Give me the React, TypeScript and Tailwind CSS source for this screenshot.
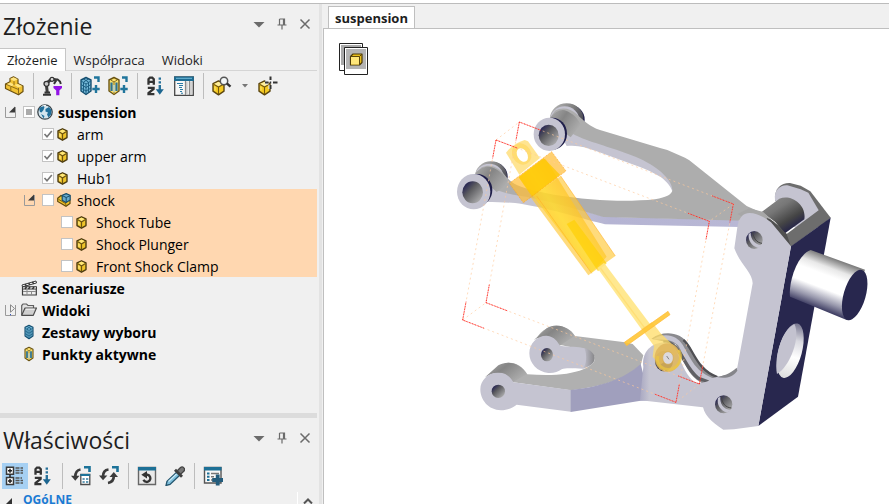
import React, { useState } from 'react'
import clsx from 'clsx'

type IconProps = { className?: string }

const Svg = ({ className = 'h-5 w-5', box = '0 0 20 20', children }: { className?: string, box?: string, children: React.ReactNode }) => (
  <svg className={clsx('block shrink-0', className)} viewBox={box} fill="none" aria-hidden="true">{children}</svg>
)

/* ---------- small icons ---------- */

const CubeIcon = ({ className = 'mr-1 h-[13px] w-[11px]' }: IconProps) => (
  <Svg className={className} box="0 0 11 13">
    <path d="M5.5 .8 10 2.9V9.6L5.5 12.2 1 9.6V2.9Z" fill="#eec42a" stroke="#4d3c10" strokeWidth="1.4" strokeLinejoin="round" />
    <path d="M5.5 1.6 8.8 3.3 5.5 5.4 2.2 3.3Z" fill="#ffe777" />
    <path d="M2 3.8 5.5 6.1 9 3.8M5.5 6.1V11" stroke="#6d5411" strokeWidth="1.2" />
    <path d="M3 5.6v3.2" stroke="#fff0a0" />
  </Svg>
)

const BlueCube = () => (
  <>
    <path d="M8 1.5 13 4V15L8 18.5 3 15V4Z" fill="#74b8d8" stroke="#164f70" strokeWidth="1.4" strokeLinejoin="round" />
    <path d="M3 5 8 8l5-3M8 8v10M3 8.5 8 11.5l5-3M3 12l5 3 5-3M5.5 3 10.5 6M10.5 3 5.5 6M5.5 6.5V16M10.5 6.5V16" stroke="#1d5f83" strokeWidth="1" />
  </>
)

const YellowPoint = () => (
  <>
    <path d="M8 1.5 13 4V15L8 18.5 3 15V4Z" fill="#ffe46d" stroke="#6b5514" strokeWidth="1.4" strokeLinejoin="round" />
    <path d="M5.5 6.5V15M10.5 6.5V15" stroke="#2a7196" strokeWidth="2.2" />
    <path d="M8 5v12M5 4.2 8 6l3-1.8" stroke="#8d762b" strokeWidth="1" />
    <path d="M8 9v7" stroke="#b9dff0" strokeWidth="1.4" />
  </>
)

const AddMark = () => (
  <path d="M14 1.5H18.5V6M16 9v8M12.3 13h7.4" stroke="#20759c" strokeWidth="2.4" />
)

const PartIcon = () => (
  <Svg>
    <path d="M1.5 8 6 5.8V2.5L9.5 .8 14 3.2V7.5L19 10V15.5L14.5 18.8 1.5 12.5Z" fill="#f1c233" stroke="#6b5010" strokeWidth="1.2" strokeLinejoin="round" />
    <path d="m6 3 4 2 3.8-1.8L9.6 1.3ZM2.5 8.2l4.4 2.2 3.4-1.6L6.2 6.6ZM10.3 8.8 14.4 11.5 18.2 10 14 8Z" fill="#ffe583" />
    <path d="M10 5.2V9M6.8 10.8v4M14.5 11.8v6M1.8 8.2 14.5 13.5" stroke="#8e6c15" />
  </Svg>
)

const RobotFilterIcon = () => (
  <Svg>
    <path d="M1 18.7H9M2.5 16.5H8" stroke="#333" strokeWidth="2" />
    <path d="M5.3 16.5 4.2 7.5 9.5 3.2 15 4" stroke="#3c3c3c" strokeWidth="3" />
    <circle cx="4.5" cy="7.8" r="2.5" fill="#c9c9c9" stroke="#333" strokeWidth="1.3" />
    <circle cx="10" cy="3.3" r="2" fill="#ddd" stroke="#333" strokeWidth="1.2" />
    <path d="M14 4.5 12 8M15 3l3 2.5 .8 2.5" stroke="#333" strokeWidth="2" />
    <path d="M11.5 10H20V12L17.4 14.5V19.3H14.2V14.5L11.5 12Z" fill="#9213e6" />
  </Svg>
)

const SelectionAddIcon = () => <Svg><g transform="translate(-2 0)"><BlueCube /></g><AddMark /></Svg>
const PointAddIcon = () => <Svg><g transform="translate(-2 0)"><YellowPoint /></g><AddMark /></Svg>

const SortIcon = () => (
  <Svg>
    <path d="M2.5 8.8V3.3L4 1.6H6.2L7.8 3.3V8.8M2.5 5.8H7.8M1.8 11.8H7.6V13L2.5 17V18.2H8.4" stroke="#333" strokeWidth="2.3" />
    <path d="M13.8 1.5v2.3M13.8 5.3v2.3M13.8 9v7" stroke="#27719a" strokeWidth="2.4" />
    <path d="M9.8 13.2H17.8L13.8 18.8Z" fill="#1d6690" />
  </Svg>
)

const ColumnsIcon = () => (
  <Svg>
    <path d="M.7 1H19.3V19.3H.7Z" fill="#f7f7f7" stroke="#484848" strokeWidth="1.3" />
    <path d="M.2.5H19.8V5H.2Z" fill="#1d6d94" />
    <path d="M2 2.3H18" stroke="#72b9d8" strokeWidth="1" />
    <path d="M11.5 5V19M15.5 5V19" stroke="#8b8b8b" strokeWidth="1.2" />
    <path d="M12.8 5.5V19M17 5.5V19" stroke="#c9c9c9" strokeWidth="1.6" />
    <path d="M3 7.5H9M5 9.5H9M5 11.5H8M6 13.5H9M6 15.5H8M7 17.3H9" stroke="#2a7ba5" strokeWidth="1.1" />
  </Svg>
)

const ToolCube = () => (
  <>
    <path d="M6.5 5 12 7.7V15.2L6.5 18.8 1 15.2V7.7Z" fill="#f5ca22" stroke="#5c460f" strokeWidth="1.4" strokeLinejoin="round" />
    <path d="M6.5 5.8 11 8 6.5 10.7 2 8Z" fill="#ffef9b" />
    <path d="M2 8.4 6.5 11 11 8.4M6.5 11v7" stroke="#76590c" strokeWidth="1.1" />
    <path d="M3 10.5v4" stroke="#ffe876" />
  </>
)

const FindPartIcon = () => (
  <Svg>
    <ToolCube />
    <circle cx="12" cy="5" r="3.7" fill="#f3f7f8" stroke="#555" strokeWidth="1.5" />
    <path d="m14.8 7.4 3.7 3.2" stroke="#333" strokeWidth="2.5" />
  </Svg>
)

const LocatePartIcon = () => (
  <Svg>
    <ToolCube />
    <path d="M12.5.5V4M12.5 9v4M7 6.5h3.5M15 6.5h4.5" stroke="#f0f0f0" strokeWidth="4" />
    <path d="M12.5.5V4M12.5 9v4M7 6.5h3.5M15 6.5h4.5M11.8 6.5h1.4" stroke="#333" strokeWidth="2" />
  </Svg>
)

const CategoryIcon = () => (
  <Svg>
    <path d="M1.5 1.2H8.5V8.2H1.5ZM1.5 11.5H8.5V18.5H1.5Z" fill="#fff" stroke="#3a3a3a" strokeWidth="1.5" />
    <path d="M5 2.8V6.8M3 4.8H7M5 13V17M3 15H7M5 8.5v3" stroke="#222" strokeWidth="1.5" />
    <path d="M10.5 2H18M10.5 4.5H18M10.5 7H18M10.5 12H17M10.5 14.5H18M10.5 17H18" stroke="#555" strokeWidth="1.4" strokeDasharray="4 1" />
  </Svg>
)

const CopyStateIcon = () => (
  <Svg>
    <path d="M9.5 3.5C6 4 4.3 6.8 4.3 11" stroke="#3b3b3b" strokeWidth="2.7" />
    <path d="M0 9.8H8.5L4.3 14.8Z" fill="#3b3b3b" />
    <path d="M13 1.3h5.5V6" stroke="#1d7399" strokeWidth="2.6" />
    <path d="M9.8 8.5h9v10h-9z" fill="#fff" stroke="#4b4b4b" strokeWidth="1.3" />
    <path d="M9.5 9h9.6" stroke="#1d7399" strokeWidth="2" />
    <path d="M11.5 13h2.2M15 13h2.3M11.5 16h2.2M15 16h2.3" stroke="#337ca0" strokeWidth="1.6" />
  </Svg>
)

const SyncIcon = () => (
  <Svg>
    <path d="M9.5 3.5C5.5 4 4 6.5 4 10.5" stroke="#3b3b3b" strokeWidth="2.7" />
    <path d="M0 9.5H8.3L4 14.3Z" fill="#3b3b3b" />
    <path d="M9 17c4-.7 5.8-3.5 5.8-7" stroke="#3b3b3b" strokeWidth="2.7" />
    <path d="M10.5 11H19L14.8 6Z" fill="#3b3b3b" />
    <path d="M13 1.3h5.5V6" stroke="#1d7399" strokeWidth="2.6" />
  </Svg>
)

const ResetIcon = () => (
  <Svg>
    <path d="M1.5 1.5h17v17h-17z" fill="#e9e9e9" stroke="#666" strokeWidth="1.4" />
    <path d="M1 1h18v3.5H1z" fill="#1d7096" />
    <path d="M7.5 8.8h3a3.6 3.6 0 1 1-4 5" stroke="#333" strokeWidth="2.4" />
    <path d="M4.3 8.8 10 5V12.4Z" fill="#333" />
  </Svg>
)

const PipetteIcon = () => (
  <Svg>
    <path d="m12 6 3 3L5 18.5l-4 1 1-4.2Z" fill="#7dbedb" stroke="#24566f" strokeWidth="1.3" />
    <path d="M3.5 15.5 11.5 8" stroke="#c9eaf6" strokeWidth="1.3" />
    <path d="M12.3 4.7 15.5 1.5C17.8-.3 21 3 18.8 5.2l-3.3 3.2" fill="#777" stroke="#444" strokeWidth="1.3" />
    <path d="m10 3.8 7 7" stroke="#3e3e3e" strokeWidth="2.8" />
  </Svg>
)

const AddPropertyIcon = () => (
  <Svg>
    <path d="M1.5 1.5h16.5v15.5H1.5z" fill="#f8f8f8" stroke="#555" strokeWidth="1.4" />
    <path d="M1 1h17.5v3.5H1z" fill="#1d7096" />
    <path d="M4 7.5h2.5M4 10.8h2.5M4 14h2.5" stroke="#1d7096" strokeWidth="2" />
    <path d="M8 7.5h8M8 10.8h3M8 14h2" stroke="#777" strokeWidth="1.5" />
    <path d="M14.7 8.5v11M9.2 14h11" stroke="#235c7c" strokeWidth="3.8" />
  </Svg>
)

const GlobeIcon = () => (
  <Svg className="h-4 w-4" box="0 0 16 16">
    <circle cx="8" cy="8" r="7.2" fill="#d3e5ee" stroke="#3c464c" strokeWidth="1.3" />
    <path d="M2 4.5 5.5 1.5 7.5 3 6.5 6 4.5 8.5 3 8ZM8.5 5 12 3 14.5 6 14 10.5 11.5 13.5 10 10.5 11 8.5 8.5 7.5ZM4 10l3.5 2-1 2.5Z" fill="#216f9a" />
    <path d="M4.5 2.5 6.5 1.5 9 1.4" stroke="#fff" />
  </Svg>
)

const AssemblyIcon = () => (
  <Svg className="h-3.5 w-3.5" box="0 0 14 14">
    <path d="M.7 5.3 4 2.5 13 7v3.5L9 13.3.7 8.5Z" fill="#f1c52c" stroke="#5f490d" strokeWidth="1.2" />
    <path d="M5.2 2.3 9.2.6 13.2 2.3V7L9 9.5 5.2 7.3Z" fill="#68aacb" stroke="#184d6b" strokeWidth="1.2" />
    <path d="M5.5 2.7 9.2 4.5l3.8-1.8M9.2 4.5V9" stroke="#184d6b" />
    <path d="M1.5 6.3 8.8 10.7V13" stroke="#806010" />
  </Svg>
)

const ClapperIcon = () => (
  <Svg className="h-4 w-4" box="0 0 16 16">
    <path d="M1.5 7h13.8v8H1.5z" fill="#eee" stroke="#3c3c3c" strokeWidth="1.2" />
    <path d="M1 5 15 1l.5 2L1.5 6.8ZM1.5 6.8h14V9h-14z" fill="#fff" stroke="#3c3c3c" strokeWidth="1" />
    <path d="m4 4.2 1.5 1.5m2-2.5L9 4.7m2.3-2.6 1.5 1.6M4 9l1.5-2M7.5 9 9 7m2.5 2L13 7" stroke="#333" strokeWidth="1.5" />
    <path d="M2 11.5h13M6 9.5v5M10.5 12v3" stroke="#8a8a8a" />
  </Svg>
)

const FolderIcon = () => (
  <Svg className="h-4 w-4" box="0 0 16 16">
    <path d="M.7 13V3.5L2 2H5.5L7 3.5H12.5V6" fill="#e1e1e1" stroke="#606060" strokeWidth="1.2" />
    <path d="M.7 13.3 4 6H15.5L12.3 13.3Z" fill="#cfcfcf" stroke="#4d4d4d" strokeWidth="1.2" strokeLinejoin="round" />
    <path d="M4.8 7.2h8.8" stroke="#f6f6f6" />
  </Svg>
)

const SelectionSetIcon = () => <Svg className="h-4 w-3.5" box="1 0 14 20"><BlueCube /></Svg>
const ActivePointIcon = () => <Svg className="h-4 w-3.5" box="1 0 14 20"><YellowPoint /></Svg>

const Expander = ({ open }: { open: boolean }) => (
  <Svg className="h-3 w-3" box="0 0 12 12">
    <path d="M.5 1V11.5H10.5V1" stroke="#9a9a9a" />
    {open ? <path d="M10 .5V6.5H4Z" fill="#3a3a3a" /> : <path d="M5.5.8 9.5 4.5 5.5 8.2Z" fill="#f4f4f4" stroke="#888" />}
    {!open && <path d="M5.5 10v1.2" stroke="#3a57c0" />}
  </Svg>
)

/* ---------- panel pieces ---------- */

const PanelHeader = ({ title }: { title: string }) => (
  <header className="flex h-11 shrink-0 items-center pl-[3px] pr-[6px]">
    <h2 className="flex-1 text-[23px] leading-8 text-[#1e1e1e]">{title}</h2>
    <div className="flex gap-[11px] pb-1">
      <button type="button" aria-label="Menu">
        <Svg className="h-3 w-3" box="0 0 12 12"><path d="M.5 4H11.5L6 9.5Z" fill="#6b6b6b" /></Svg>
      </button>
      <button type="button" aria-label="Przypnij">
        <Svg className="h-3 w-3" box="0 0 12 12"><path d="M3.5 1H8.5V6.5M3.5 1V6.5M7.5 1V6.5M1.5 7H10.5M6 7V11.5" stroke="#6b6b6b" strokeWidth="1.2" /></Svg>
      </button>
      <button type="button" aria-label="Zamknij">
        <Svg className="h-3 w-3" box="0 0 12 12"><path d="M1.5 1.5 10.5 10.5M10.5 1.5 1.5 10.5" stroke="#6b6b6b" strokeWidth="1.5" /></Svg>
      </button>
    </div>
  </header>
)

const Separator = () => <span className="ml-px h-[26px] w-px bg-[#bdbdbd]" />

const Tool = ({ label, active, children }: { label: string, active?: boolean, children: React.ReactNode }) => (
  <button type="button" aria-label={label} className={clsx(active && '-m-[3px] bg-[#a6d0f3] p-[3px]')}>{children}</button>
)

type Item = {
  name: string
  level: number
  icon: React.ReactNode
  check?: 'on' | 'off' | 'mixed'
  open?: boolean
  bold?: boolean
  marked?: boolean
}

const items: Item[] = [
  { name: 'suspension', level: 0, icon: <GlobeIcon />, check: 'mixed', open: true, bold: true },
  { name: 'arm', level: 1, icon: <CubeIcon />, check: 'on' },
  { name: 'upper arm', level: 1, icon: <CubeIcon />, check: 'on' },
  { name: 'Hub1', level: 1, icon: <CubeIcon />, check: 'on' },
  { name: 'shock', level: 1, icon: <AssemblyIcon />, check: 'off', open: true, marked: true },
  { name: 'Shock Tube', level: 2, icon: <CubeIcon />, check: 'off', marked: true },
  { name: 'Shock Plunger', level: 2, icon: <CubeIcon />, check: 'off', marked: true },
  { name: 'Front Shock Clamp', level: 2, icon: <CubeIcon />, check: 'off', marked: true },
  { name: 'Scenariusze', level: 0, icon: <ClapperIcon />, bold: true },
  { name: 'Widoki', level: 0, icon: <FolderIcon />, open: false, bold: true },
  { name: 'Zestawy wyboru', level: 0, icon: <SelectionSetIcon />, bold: true },
  { name: 'Punkty aktywne', level: 0, icon: <ActivePointIcon />, bold: true },
]

const indent = ['pl-[5px]', 'pl-[24px]', 'pl-[43px]']

const TreeRow = ({ item }: { item: Item }) => {
  const [checked, setChecked] = useState(item.check === 'on')

  return (
    <li className={clsx('flex h-[22px] items-center', indent[item.level], item.marked && 'bg-[#ffd7b0]')}>
      <span className="w-3 shrink-0">
        {item.open !== undefined && <button type="button" aria-label={item.name} className="block"><Expander open={item.open} /></button>}
      </span>
      <label className={clsx('flex items-center', item.check ? 'ml-[6px]' : 'ml-1')}>
        {item.check && (
          <span className="mr-0.5 grid h-3 w-3 place-items-center">
            <input
              type="checkbox"
              checked={checked}
              ref={(el) => { if (el) el.indeterminate = item.check === 'mixed' }}
              onChange={(e) => setChecked(e.target.checked)}
              className="col-start-1 row-start-1 h-3 w-3 appearance-none border border-[#c3c3c3] bg-white"
            />
            {item.check === 'mixed' && <span className="pointer-events-none col-start-1 row-start-1 h-1.5 w-1.5 bg-[#ababab]" />}
            {checked && (
              <Svg className="pointer-events-none col-start-1 row-start-1 h-3 w-3" box="0 0 12 12">
                <path d="m2.5 6 2.5 2.8L9.8 3" stroke="#777" strokeWidth="1.6" />
              </Svg>
            )}
          </span>
        )}
        <span className="mr-[5px] flex w-4 justify-center">{item.icon}</span>
        <span className={clsx('whitespace-nowrap pt-0.5 text-sm leading-5 text-black', item.bold && 'font-bold')}>{item.name}</span>
      </label>
    </li>
  )
}

/* ---------- 3D view ---------- */

type P = [number, number]

// corners of the selection box: four on the upper side, four under them
const top: P[] = [[168, 150], [238, 96], [880, 342], [808, 394]]
const bottom: P[] = [[68, 690], [138, 638], [778, 882], [708, 937]]

const towards = (a: P, b: P, len: number): P => {
  const d = Math.hypot(b[0] - a[0], b[1] - a[1])
  return [a[0] + (b[0] - a[0]) * len / d, a[1] + (b[1] - a[1]) * len / d]
}

const SelectionBox = () => {
  const edges: [P, P][] = []
  const ticks: [P, P][] = []
  for (let i = 0; i < 4; i++) {
    edges.push([top[i], top[(i + 1) % 4]], [bottom[i], bottom[(i + 1) % 4]], [top[i], bottom[i]])
    const along = 3 - i
    ticks.push([top[i], towards(top[i], bottom[i], 56)], [bottom[i], towards(bottom[i], top[i], 56)])
    ticks.push([top[i], towards(top[i], top[along], 68)], [bottom[i], towards(bottom[i], bottom[along], 68)])
  }
  return (
    <>
      {edges.map(([a, b], i) => <path key={i} d={`M${a}L${b}`} stroke="#ffc999" strokeWidth="3" strokeDasharray="6 9" opacity=".65" />)}
      {ticks.map(([a, b], i) => <path key={i} d={`M${a}L${b}`} stroke="#f22" strokeWidth="3" strokeDasharray="3 2" />)}
    </>
  )
}

const UpperArm = () => (
  <>
    <ellipse cx="387" cy="89" rx="47" ry="45" fill="#1f1e4a" />
    <ellipse cx="380" cy="86" rx="50" ry="46" fill="url(#rim)" />
    <ellipse cx="374" cy="92" rx="44" ry="43" fill="#c5c4d1" />
    <ellipse cx="158" cy="260" rx="45" ry="43" fill="#1f1e4a" />
    <ellipse cx="153" cy="258" rx="48" ry="44" fill="url(#rim)" />
    <ellipse cx="148" cy="263" rx="43" ry="42" fill="#c5c4d1" />

    <path d="M340 90C375 130 405 130 470 150L600 200C650 220 702 262 702 290L697 304C692 290 682 276 662 261C640 248 620 238 600 231L470 184C440 172 410 164 380 168Z" fill="#c5c4d1" />
    <path d="M118 270C190 320 330 322 430 362L495 380 896 390 900 411 495 403C440 390 330 356 250 343C205 335 180 338 140 336Z" fill="url(#armWall)" />
    <path d="M332 82 345 62C368 50 392 56 410 72C430 92 450 110 480 120L660 174 682 180 735 203 748 211 920 348 955 364 910 392 490 381C400 356 330 332 230 316C190 308 150 300 125 268L110 248 125 232C150 220 175 232 190 250C205 270 222 284 246 291C290 306 380 324 480 330C530 334 600 333 645 328C680 322 697 312 697 300C697 272 660 234 600 206C540 180 460 160 420 142C385 126 375 115 345 95Z" fill="#adadad" />
    <path d="M330 84C345 64 365 56 378 62C398 70 414 84 422 104L392 142 350 110Z" fill="url(#boss)" />
    <path d="M106 250C118 234 140 226 155 232C180 240 200 262 206 282L170 306Z" fill="url(#boss)" />

    <ellipse cx="337" cy="131" rx="44" ry="48" fill="#1f1e4a" />
    <ellipse cx="328" cy="133" rx="47" ry="50" fill="#c5c4d1" />
    <ellipse cx="326" cy="136" rx="30" ry="32" fill="url(#bore)" />
    <ellipse cx="112" cy="300" rx="45" ry="48" fill="#1f1e4a" />
    <ellipse cx="101" cy="305" rx="50" ry="53" fill="#c5c4d1" />
    <ellipse cx="98" cy="307" rx="31" ry="33" fill="url(#bore)" />
  </>
)

const LowerArm = () => (
  <g transform="translate(30 600)">
    <path d="M262 142C285 100 350 94 375 138L525 157 548 162 580 196 572 226C520 268 470 288 362 301L190 277 140 240C165 205 210 215 232 253C300 258 360 255 400 238C430 225 438 212 434 200C428 184 380 175 330 165Z" fill="#b0b0b0" />
    <path d="M252 150 290 115C318 96 358 110 374 138L328 168C315 140 282 132 252 150Z" fill="url(#boss)" />
    <path d="M105 262 145 226C175 208 215 222 230 253L188 277C172 246 138 240 105 262Z" fill="url(#boss)" />
    <path d="M400 174C424 178 437 196 434 208C432 222 415 232 398 237Z" fill="url(#slotEnd)" />
    <path d="M290 137C315 140 322 155 330 167C360 172 385 168 403 175C412 195 410 225 398 236C370 236 350 232 335 238C325 246 310 250 295 249C262 246 238 220 238 190C238 160 262 136 290 137Z" fill="#c5c4d1" />
    <ellipse cx="291" cy="194" rx="18" ry="20" fill="url(#bore)" />
    <path d="M145 248C170 248 182 262 190 277L363 300V365L200 344C185 355 170 361 153 361C115 360 91 330 91 298C91 270 115 247 145 248Z" fill="#c5c4d1" />
    <ellipse cx="145" cy="304" rx="20" ry="20" fill="url(#bore)" />
    <path d="M362 300C455 290 520 268 572 222L600 331 572 332 362 366Z" fill="#a09fbd" />

    <path d="M604 146C640 120 692 126 713 160C737 196 748 244 806 260L850 250 860 240V262L775 288C700 260 706 200 676 162Z" fill="#8a8a8e" />
    <path d="M700 150C728 170 738 240 802 261" stroke="#505054" strokeWidth="7" />
    <path d="M606 149C645 124 680 136 698 164C722 205 738 250 796 266L772 280C712 258 706 200 684 166C665 148 640 148 606 149Z" fill="#c5c4d1" />
    <path d="M640 156C692 154 698 228 744 264L776 276" stroke="#606064" strokeWidth="10" />
    <path d="M580 230C574 180 612 153 652 158C690 168 688 240 734 276C756 288 790 262 850 258V354L758 352 585 332 570 331Z" fill="url(#bracket)" />
    <ellipse cx="642" cy="213" rx="27" ry="31" fill="#3a3840" />
  </g>
)

const Shock = () => (
  <>
    <path d="M198 188Q220 160 254 150L264 154 300 204 238 254Z" fill="#ffd966" fillOpacity=".72" />
    <ellipse cx="245" cy="192" rx="28" ry="33" fill="#ffd34f" fillOpacity=".5" transform="rotate(-30 245 192)" />
    <ellipse cx="247" cy="195" rx="15" ry="22" fill="#fff" transform="rotate(-30 247 195)" />
    <path d="M208 280 335 185 378 243 250 338Z" fill="#ffbe3a" fillOpacity=".72" />
    <path d="M272 322 362 258 526 498 445 556Z" fill="#ffc838" fillOpacity=".66" />
    <path d="M236 262 315 204 500 500 455 548Z" fill="url(#shock)" fillOpacity=".68" />
    <path d="M236 262 311 204 360 254 276 320Z" fill="#ffc800" fillOpacity=".75" />
    <path d="M380 402 403 389 500 520 474 544Z" fill="#ffcf00" fillOpacity=".65" />
    <path d="M208 280 335 185 378 243 250 338Z" stroke="#ff9d16" strokeDasharray="3 3" strokeWidth="2" />
    <path d="M290 318 455 550M362 258 526 498" stroke="#ffad24" strokeWidth="3" opacity=".55" />
    <path d="M472 534 492 518 630 702 606 720Z" fill="#ffe684" fillOpacity=".9" />
    <path d="M482 535 615 715" stroke="#ffd65c" strokeWidth="4" opacity=".5" />
    <path d="M604 716 636 696 662 730 720 785 660 824 638 800 642 768Z" fill="#ffdc66" fillOpacity=".75" />
    <path d="M553 757 684 664 690 674 560 767Z" fill="#ffc735" fillOpacity=".9" stroke="#ffb93a" strokeWidth="2" />
    <ellipse cx="683" cy="803" rx="39" ry="43" fill="#e0b65c" fillOpacity=".86" />
    <path d="M654 798C645 825 672 846 700 835C720 825 728 802 716 780" stroke="#edc740" strokeWidth="9" opacity=".7" />
    <ellipse cx="684" cy="804" rx="16" ry="19" fill="#dcd9dd" stroke="#d4a84c" strokeWidth="2" />
    <path d="m680 798 7 10" stroke="#555" strokeWidth="2" />
  </>
)

const Hub = () => (
  <g transform="translate(480 180)">
    <path d="M525 150C523 112 545 98 570 99L602 107 631 124 692 203 660 230 580 230Z" fill="#6d6d6d" />
    <path d="M525 150C520 120 542 104 562 106L602 118 625 128 657 182 590 240Z" fill="#c5c4d1" />
    <path d="M510 215 573 290 692 203 657 180 560 252 535 225Z" fill="#6d6d6d" />
    <path d="M485 186 538 146C575 132 620 165 613 208L555 250 525 215Z" fill="url(#pin)" />
    <path d="M412 192 448 175 490 186 530 225 500 240Z" fill="#a7a7a7" />
    <path d="M500 204C518 209 522 216 560 252L573 290 505 218Z" fill="#505050" />
    <path d="M573 289 692 203 594 740 475 828Z" fill="#28274e" />
    <path d="M448 189C470 189 495 202 513 217L573 289 475 828 402 838 370 839C332 812 305 792 308 752C304 718 318 686 350 681C372 678 402 682 412 652L458 400C458 368 420 342 403 295L413 225C419 199 432 189 448 189Z" fill="#c5c4d1" />
    <path d="M350 681C370 678 388 672 410 653L412 662C398 684 372 686 350 681Z" fill="#85858a" />

    <path d="M570 440C565 400 590 315 632 300L795 359 742 511Z" fill="url(#axle)" />
    <ellipse cx="764" cy="435" rx="33" ry="78" fill="#28274e" transform="rotate(16 764 435)" />

    <ellipse cx="571" cy="602" rx="35" ry="84" fill="url(#opening)" transform="rotate(15 571 602)" />
    <path d="M583 522C603 560 570 650 531 672C522 632 540 545 583 522Z" fill="#c3c2cf" />

    <ellipse cx="463" cy="270" rx="25" ry="27" fill="url(#bore)" />
    <path d="M452 248C452 268 465 284 485 286L475 294C455 288 444 272 446 252Z" fill="#c5c4d1" />
    <path d="M458 246C461 266 470 278 486 280" stroke="#444" strokeWidth="3" />
    <ellipse cx="371" cy="763" rx="26" ry="27" fill="url(#bore)" />
    <path d="M361 740C359 760 370 778 392 780L382 788C360 782 350 763 354 744Z" fill="#c5c4d1" />
    <path d="M364 739C366 760 376 772 394 774" stroke="#444" strokeWidth="3" />
  </g>
)

const Model = () => (
  <svg className="block h-full w-full" viewBox="-348 -183 1695 1425" preserveAspectRatio="xMinYMin meet" fill="none" role="img" aria-label="suspension">
    <defs>
      <linearGradient id="bore" x1="0" y1="0" x2="1" y2="1">
        <stop offset=".1" stopColor="#1e1c50" /><stop offset=".4" stopColor="#5b5b5f" /><stop offset="1" stopColor="#c2c2c2" />
      </linearGradient>
      <linearGradient id="boss" x1="0" y1="0" x2="1" y2=".6">
        <stop offset="0" stopColor="#acacac" /><stop offset=".45" stopColor="#858585" /><stop offset="1" stopColor="#aeaeae" />
      </linearGradient>
      <linearGradient id="rim" x1="0" y1="0" x2="1" y2=".5">
        <stop offset=".1" stopColor="#b4b4b4" /><stop offset=".6" stopColor="#808080" /><stop offset="1" stopColor="#4c4c55" />
      </linearGradient>
      <linearGradient id="slotEnd" x1="0" x2="1">
        <stop offset="0" stopColor="#c5c4d1" /><stop offset="1" stopColor="#858587" />
      </linearGradient>
      <linearGradient id="armWall" x1="0" x2="1">
        <stop offset=".3" stopColor="#c5c4d1" /><stop offset=".5" stopColor="#b5b4d3" /><stop offset="1" stopColor="#b9b8d5" />
      </linearGradient>
      <linearGradient id="bracket" x1="0" x2="1">
        <stop offset="0" stopColor="#a9a8c2" /><stop offset=".1" stopColor="#c5c4d1" />
      </linearGradient>
      <linearGradient id="pin" x1=".2" y1="0" x2=".8" y2=".8">
        <stop offset="0" stopColor="#8a8a8a" /><stop offset=".35" stopColor="#777" /><stop offset=".75" stopColor="#454545" /><stop offset="1" stopColor="#262548" />
      </linearGradient>
      <linearGradient id="axle" gradientUnits="userSpaceOnUse" x1="712" y1="328" x2="655" y2="478">
        <stop offset="0" stopColor="#777" /><stop offset=".2" stopColor="#e8e8e8" /><stop offset=".35" stopColor="#fff" /><stop offset=".6" stopColor="#fff" /><stop offset=".82" stopColor="#9999ad" /><stop offset="1" stopColor="#36355c" />
      </linearGradient>
      <linearGradient id="opening" x1="0" y1="0" x2="0" y2="1">
        <stop offset="0" stopColor="#77768f" /><stop offset=".3" stopColor="#d9d9e0" /><stop offset=".6" stopColor="#fff" /><stop offset="1" stopColor="#ddd" />
      </linearGradient>
      <linearGradient id="shock" gradientUnits="userSpaceOnUse" x1="330" y1="420" x2="430" y2="355">
        <stop offset="0" stopColor="#ffc928" /><stop offset=".4" stopColor="#ffde2b" /><stop offset="1" stopColor="#ffbd22" />
      </linearGradient>
    </defs>
    <UpperArm />
    <LowerArm />
    <Hub />
    <Shock />
    <SelectionBox />
  </svg>
)

const ViewThumbnail = () => (
  <Svg className="h-8 w-[29px]" box="0 0 29 32">
    <path d="M.5.5h23v27H.5z" fill="#fff" stroke="#222" />
    <path d="M2 2h20v20H2z" fill="#a9a9a9" />
    <path d="M5.5 4.5h23v27h-23z" fill="#fff" stroke="#222" />
    <path d="M7 6h20v20H7z" fill="#b4b4b4" />
    <path d="M11.5 13.5 14 11h9v8.5L20.5 22h-9z" fill="#e8bd19" stroke="#4d3a06" strokeWidth="1.2" strokeLinejoin="round" />
    <path d="M12 13.5h8.5V21.5H12z" fill="#ffe77a" />
    <path d="M11.5 13.5h9V22M20.5 13.5 23 11" stroke="#5b460a" />
  </Svg>
)

/* ---------- page ---------- */

const tabs = ['Złożenie', 'Współpraca', 'Widoki']

const App = () => {
  const [tab, setTab] = useState('Złożenie')

  return (
    <div className="flex h-screen flex-col overflow-hidden border-t-[3px] border-white bg-[#f0f0f0] font-['Open_Sans','Noto_Sans',sans-serif]">
      <div className="flex min-h-0 flex-1 border-t border-[#bcbcbc]">
        <aside className="flex w-[322px] shrink-0 flex-col border-r-[3px] border-[#e3e3e3] pr-0.5">
          <PanelHeader title="Złożenie" />
          <nav className="flex h-[23px] shrink-0 border-b border-[#d5d5d5]">
            {tabs.map((t) => (
              <button
                key={t}
                type="button"
                onClick={() => setTab(t)}
                className={clsx('-mb-px px-[7px] text-[13px] leading-5 text-[#1e1e1e]', t === tab ? 'border-r border-t border-[#c6c6c6] bg-white' : 'mr-0.5 ml-px')}
              >
                {t}
              </button>
            ))}
          </nav>
          <div className="flex h-[30px] shrink-0 items-center gap-2 pl-1">
            <Tool label="Część"><PartIcon /></Tool>
            <Separator />
            <Tool label="Filtr"><RobotFilterIcon /></Tool>
            <Separator />
            <Tool label="Nowy zestaw wyboru"><SelectionAddIcon /></Tool>
            <Tool label="Nowy punkt aktywny"><PointAddIcon /></Tool>
            <Separator />
            <Tool label="Sortuj"><SortIcon /></Tool>
            <Tool label="Kolumny"><ColumnsIcon /></Tool>
            <Separator />
            <Tool label="Znajdź"><FindPartIcon /></Tool>
            <Tool label="Opcje wyszukiwania">
              <Svg className="mx-0.5 h-1.5 w-1.5" box="0 0 6 6"><path d="M0 1H6L3 4.5Z" fill="#777" /></Svg>
            </Tool>
            <Tool label="Wskaż"><LocatePartIcon /></Tool>
          </div>
          <ul className="min-h-0 flex-1 overflow-hidden">
            {items.map((item) => <TreeRow key={item.name} item={item} />)}
          </ul>

          <div className="h-[5px] shrink-0 bg-[#dcdcdc]" />

          <PanelHeader title="Właściwości" />
          <div className="flex h-[30px] shrink-0 items-center gap-2 pb-0.5 pl-[5px]">
            <Tool label="Kategorie" active><CategoryIcon /></Tool>
            <Tool label="Alfabetycznie"><SortIcon /></Tool>
            <Separator />
            <Tool label="Kopiuj stan"><CopyStateIcon /></Tool>
            <Tool label="Synchronizuj"><SyncIcon /></Tool>
            <Separator />
            <Tool label="Przywróć"><ResetIcon /></Tool>
            <Tool label="Próbnik"><PipetteIcon /></Tool>
            <Separator />
            <Tool label="Dodaj właściwość"><AddPropertyIcon /></Tool>
          </div>
          <div className="flex h-3 shrink-0 overflow-hidden">
            <h3 className="flex flex-1 items-start gap-[11px] pl-[6px] text-xs leading-4 font-bold text-[#1b7bd4]">
              <Svg className="mt-1.5 h-1.5 w-1.5" box="0 0 6 6"><path d="M6 0V6H0Z" fill="#333" /></Svg>
              OGóLNE
            </h3>
            <button type="button" aria-label="W górę" className="flex w-5 items-start justify-center border-l border-white pt-1.5">
              <Svg className="h-1.5 w-2.5" box="0 0 10 6"><path d="M1 5.5 5 1.5 9 5.5" stroke="#555" strokeWidth="2" /></Svg>
            </button>
          </div>
        </aside>

        <main className="ml-px flex min-w-0 flex-1 flex-col">
          <nav className="flex h-6 shrink-0 items-end pl-[5px]">
            <button type="button" className="relative -mb-px h-[23px] border border-b-0 border-[#bfbfbf] bg-white px-1.5 text-[13px] leading-[22px] font-bold text-[#1e1e1e]">suspension</button>
          </nav>
          <section className="relative min-h-0 flex-1 border-t border-l border-[#bfbfbf] bg-white">
            <Model />
            <button type="button" aria-label="Widok" className="absolute top-3.5 left-[15px]"><ViewThumbnail /></button>
          </section>
        </main>
      </div>
    </div>
  )
}

export default App
